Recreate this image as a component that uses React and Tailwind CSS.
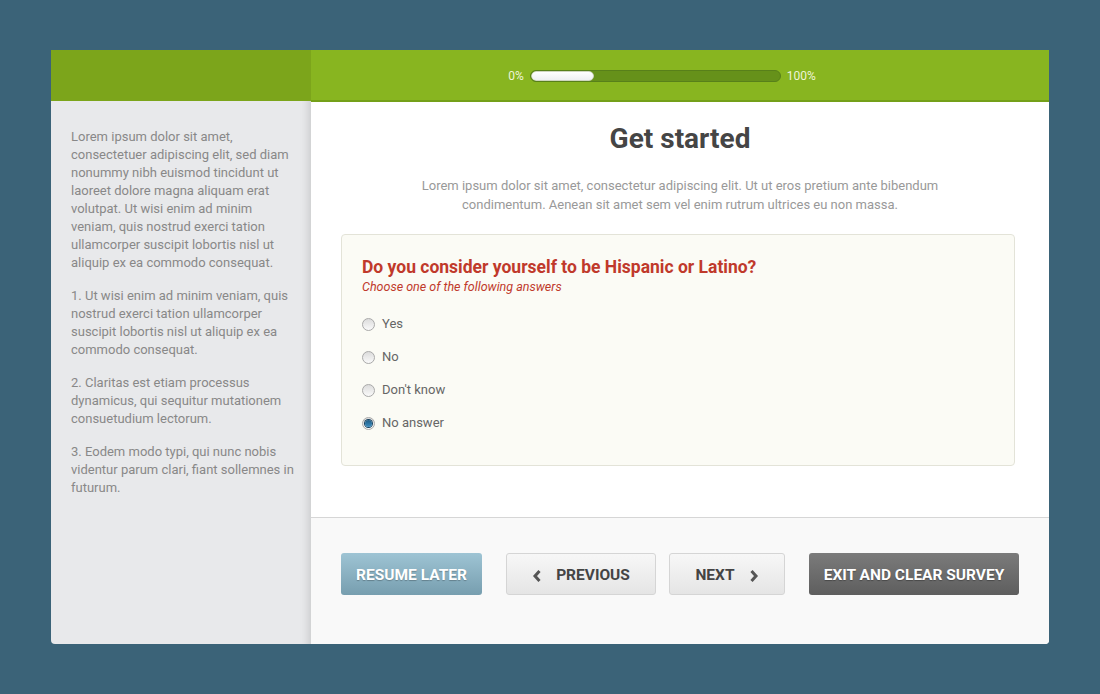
import React from 'react';

const Radio = ({ checked }) => (
  <span className="relative inline-flex w-[13px] h-[13px] rounded-full border border-[#a9a9a9] bg-gradient-to-b from-[#dcdcdc] to-[#fafafa] items-center justify-center shrink-0">
    {checked && <span className="w-[7px] h-[7px] rounded-full bg-gradient-to-b from-[#1d5b85] to-[#3d8fc2] shadow-[0_0_0_1px_#17425f]" />}
  </span>
);

const Chevron = ({ dir }) => (
  <svg width="10" height="14" viewBox="0 0 10 14" className="shrink-0">
    <path d={dir === 'left' ? 'M7.5 2 L3 7 L7.5 12' : 'M2.5 2 L7 7 L2.5 12'} fill="none" stroke="#555" strokeWidth="3" strokeLinejoin="miter" />
  </svg>
);

const answers = ['Yes', 'No', "Don't know", 'No answer'];

export default function App() {
  return (
    <div className="w-[1100px] h-[694px] bg-[#3b6378] pt-[50px] pl-[51px] font-['Roboto',sans-serif]">
      <div className="w-[998px] h-[594px] flex rounded-b-[4px] overflow-hidden">
        <aside className="w-[260px] flex flex-col bg-[#e8e9eb] shadow-[inset_-12px_0_10px_-10px_rgba(0,0,0,0.15)]">
          <div className="h-[51px] bg-[#7ca51b]" />
          <div className="pl-5 pr-4 pt-[27px] text-[13px] leading-[18px] text-[#888] space-y-[15px]">
            <p>Lorem ipsum dolor sit amet, consectetuer adipiscing elit, sed diam nonummy nibh euismod tincidunt ut laoreet dolore magna aliquam erat volutpat. Ut wisi enim ad minim veniam, quis nostrud exerci tation ullamcorper suscipit lobortis nisl ut aliquip ex ea commodo consequat.</p>
            <p>1. Ut wisi enim ad minim veniam, quis nostrud exerci tation ullamcorper suscipit lobortis nisl ut aliquip ex ea commodo consequat.</p>
            <p>2. Claritas est etiam processus dynamicus, qui sequitur mutationem consuetudium lectorum.</p>
            <p>3. Eodem modo typi, qui nunc nobis videntur parum clari, fiant sollemnes in futurum.</p>
          </div>
        </aside>

        <main className="flex-1 flex flex-col bg-white">
          <div className="h-[52px] bg-[#88b520] border-b-2 border-[#74a019] flex items-center justify-center gap-[6px] pr-[36px] pt-[1px] text-[12px] text-[#eef4d8]">
            <span>0%</span>
            <div className="w-[251px] h-[12px] rounded-full bg-[#66911a] border border-[#58801a] overflow-hidden">
              <div className="w-[63px] h-full rounded-full bg-gradient-to-b from-white to-[#eef0f2] border border-[#cfd6c0]" />
            </div>
            <span>100%</span>
          </div>

          <div className="flex-1 pt-[21px]">
            <h1 className="text-center text-[28px] leading-[32px] font-bold text-[#454545]">Get started</h1>
            <p className="mt-[21px] mx-auto w-[540px] text-center text-[13px] leading-[19px] text-[#999]">
              Lorem ipsum dolor sit amet, consectetur adipiscing elit. Ut ut eros pretium ante bibendum condimentum. Aenean sit amet sem vel enim rutrum ultrices eu non massa.
            </p>
            <div className="mt-[20px] ml-[30px] mr-[34px] h-[232px] rounded-[4px] border border-[#e3e3d8] bg-[#fbfbf5] pl-[20px] pt-[22px]">
              <h2 className="text-[17.5px] leading-[20px] font-bold text-[#c0392b]">Do you consider yourself to be Hispanic or Latino?</h2>
              <p className="mt-[2px] text-[12.5px] leading-[16px] italic text-[#c0392b]">Choose one of the following answers</p>
              <div className="mt-[21px] flex flex-col gap-[17px]">
                {answers.map((a, i) => (
                  <label key={a} className="flex items-center gap-[7px] text-[13px] leading-[16px] text-[#666]">
                    <Radio checked={i === 3} />
                    {a}
                  </label>
                ))}
              </div>
            </div>
          </div>

          <div className="h-[127px] border-t border-[#d6d6d6] bg-[#f9f9f9] pl-[30px] pt-[35px]">
            <div className="flex items-center text-[15.5px] font-bold">
              <button className="h-[42px] w-[141px] pt-[3px] rounded-[3px] uppercase bg-gradient-to-b from-[#9ec4d4] to-[#779eaf] text-white [text-shadow:0_1px_1px_rgba(0,0,0,0.25)]">Resume later</button>
              <button className="ml-[24px] h-[42px] w-[150px] pt-[3px] rounded-[3px] uppercase border border-[#d5d5d5] bg-gradient-to-b from-[#f7f7f7] to-[#e5e5e5] text-[#444] flex items-center justify-center gap-[14px]">
                <Chevron dir="left" />
                Previous
              </button>
              <button className="ml-[13px] h-[42px] w-[116px] pt-[3px] rounded-[3px] uppercase border border-[#d5d5d5] bg-gradient-to-b from-[#f7f7f7] to-[#e5e5e5] text-[#444] flex items-center justify-center gap-[14px]">
                Next
                <Chevron dir="right" />
              </button>
              <button className="ml-[24px] h-[42px] w-[210px] pt-[3px] rounded-[3px] uppercase bg-gradient-to-b from-[#7b7b7b] to-[#5e5e5e] text-white [text-shadow:0_1px_1px_rgba(0,0,0,0.3)]">Exit and clear survey</button>
            </div>
          </div>
        </main>
      </div>
    </div>
  );
}
